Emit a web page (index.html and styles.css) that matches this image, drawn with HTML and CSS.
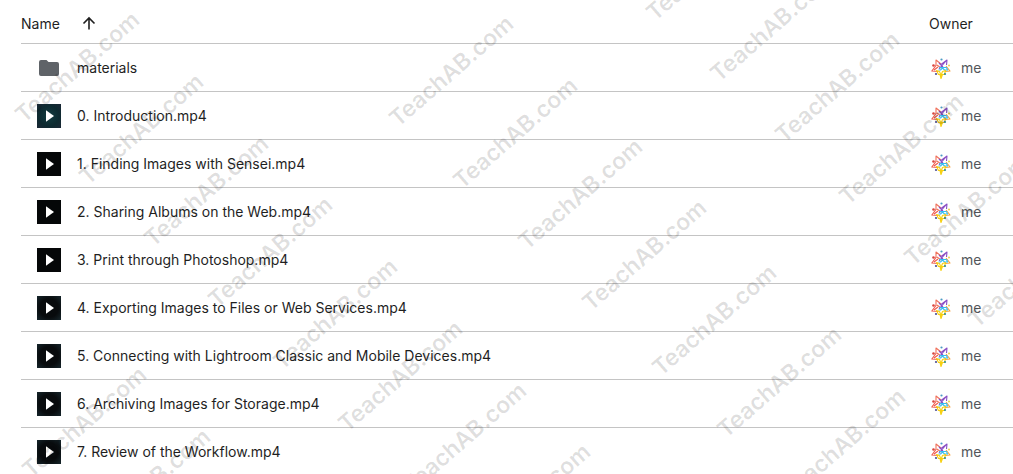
FILE: index.html
```html
<!DOCTYPE html>
<html lang="en">
  <head>
    <meta charset="UTF-8" />
    <meta name="viewport" content="width=device-width, initial-scale=1.0" />
    <title>Files</title>
    <link rel="stylesheet" href="styles.css">
  </head>
  <body>
    <!-- Shared icons -->
    <svg class="sprite" aria-hidden="true">
      <symbol id="play" viewBox="0 0 24 24">
        <path d="M9 6.200v11.600l8-5.800z" fill="#fff" />
      </symbol>
      <symbol id="avatar" viewBox="0 0 24 24">
        <g fill="none" stroke-width="1.100" stroke-linejoin="round">
          <path d="M12 8 7 4v6M8 9l4 3" stroke="#f0705a" />
          <path d="M7 9.500 2.800 15l6.500.5M5 14l4-3" stroke="#ef5b4c" />
          <path d="m17 10 4 5-5 .5" stroke="#f5a03c" />
          <path d="M12 8.500 18 4l-.5 5M17 5l-7 8M10 7l4 4" stroke="#8a4fc4" />
          <path d="M10 11.500h7.500l1 2.500h-3l-2-2-2 2h-2" stroke="#35bdf0" />
          <path d="m7.500 14.500 2 4h1.500l1 4 1.500-4h2l1-4-3 1-1.500 4-1.500-4z" stroke="#f7d010" />
        </g>
        <circle cx="12.500" cy="3.500" r="1.100" fill="#4a9bc4" />
        <circle cx="4.500" cy="9.500" r="1.300" fill="#d8453e" />
        <circle cx="20" cy="9.500" r="1" fill="#e8d24a" />
        <circle cx="7" cy="18" r="1.100" fill="#4a4f96" />
        <circle cx="16" cy="18" r="1.100" fill="#2f8f9c" />
      </symbol>
    </svg>

    <main class="files">
      <table class="file-table">
        <thead>
          <tr>
            <th class="col-name" scope="col" aria-sort="ascending">
              <div class="cell">
                Name
                <button class="sort-btn" type="button" aria-label="Reverse sort direction">
                  <svg width="16" height="16" viewBox="0 0 16 16" aria-hidden="true">
                    <path d="M8 13.500V2.500M2.500 7.500 8 2l5.500 5.500" fill="none" stroke="#1f1f1f" stroke-width="1.600" />
                  </svg>
                </button>
              </div>
            </th>
            <th class="col-owner" scope="col">Owner</th>
          </tr>
        </thead>
        <tbody>
          <tr>
            <td>
              <div class="cell file">
                <svg class="folder" viewBox="0 0 24 24" aria-hidden="true">
                  <path d="M4 4h5.500l2 2H20a2 2 0 0 1 2 2v10a2 2 0 0 1-2 2H4a2 2 0 0 1-2-2V6a2 2 0 0 1 2-2z" fill="#5f6368" />
                </svg>
                materials
              </div>
            </td>
            <td><div class="cell owner"><svg class="avatar"><use href="#avatar" /></svg>me</div></td>
          </tr>
          <tr>
            <td><div class="cell file"><svg class="thumb teal"><use href="#play" /></svg>0. Introduction.mp4</div></td>
            <td><div class="cell owner"><svg class="avatar"><use href="#avatar" /></svg>me</div></td>
          </tr>
          <tr>
            <td><div class="cell file"><svg class="thumb"><use href="#play" /></svg>1. Finding Images with Sensei.mp4</div></td>
            <td><div class="cell owner"><svg class="avatar"><use href="#avatar" /></svg>me</div></td>
          </tr>
          <tr>
            <td><div class="cell file"><svg class="thumb"><use href="#play" /></svg>2. Sharing Albums on the Web.mp4</div></td>
            <td><div class="cell owner"><svg class="avatar"><use href="#avatar" /></svg>me</div></td>
          </tr>
          <tr>
            <td><div class="cell file"><svg class="thumb"><use href="#play" /></svg>3. Print through Photoshop.mp4</div></td>
            <td><div class="cell owner"><svg class="avatar"><use href="#avatar" /></svg>me</div></td>
          </tr>
          <tr>
            <td><div class="cell file"><svg class="thumb dim"><use href="#play" /></svg>4. Exporting Images to Files or Web Services.mp4</div></td>
            <td><div class="cell owner"><svg class="avatar"><use href="#avatar" /></svg>me</div></td>
          </tr>
          <tr>
            <td><div class="cell file"><svg class="thumb dim"><use href="#play" /></svg>5. Connecting with Lightroom Classic and Mobile Devices.mp4</div></td>
            <td><div class="cell owner"><svg class="avatar"><use href="#avatar" /></svg>me</div></td>
          </tr>
          <tr>
            <td><div class="cell file"><svg class="thumb dim"><use href="#play" /></svg>6. Archiving Images for Storage.mp4</div></td>
            <td><div class="cell owner"><svg class="avatar"><use href="#avatar" /></svg>me</div></td>
          </tr>
          <tr>
            <td><div class="cell file"><svg class="thumb dim"><use href="#play" /></svg>7. Review of the Workflow.mp4</div></td>
            <td><div class="cell owner"><svg class="avatar"><use href="#avatar" /></svg>me</div></td>
          </tr>
        </tbody>
      </table>
    </main>

    <!-- Watermark over the whole page -->
    <svg class="watermark" aria-hidden="true">
      <text transform="translate(24 124) rotate(-41)">TeachAB.com</text>
      <text transform="translate(88 186) rotate(-41)">TeachAB.com</text>
      <text transform="translate(153 248) rotate(-41)">TeachAB.com</text>
      <text transform="translate(217 309) rotate(-41)">TeachAB.com</text>
      <text transform="translate(282 371) rotate(-41)">TeachAB.com</text>
      <text transform="translate(347 433) rotate(-41)">TeachAB.com</text>
      <text transform="translate(411 495) rotate(-41)">TeachAB.com</text>
      <text transform="translate(475 556) rotate(-41)">TeachAB.com</text>

      <text transform="translate(31 479) rotate(-41)">TeachAB.com</text>
      <text transform="translate(95 541) rotate(-41)">TeachAB.com</text>

      <text transform="translate(398 128) rotate(-41)">TeachAB.com</text>
      <text transform="translate(462 190) rotate(-41)">TeachAB.com</text>
      <text transform="translate(527 251) rotate(-41)">TeachAB.com</text>
      <text transform="translate(591 312) rotate(-41)">TeachAB.com</text>
      <text transform="translate(661 377) rotate(-41)">TeachAB.com</text>
      <text transform="translate(726 439) rotate(-41)">TeachAB.com</text>
      <text transform="translate(790 501) rotate(-41)">TeachAB.com</text>

      <text transform="translate(655 22) rotate(-41)">TeachAB.com</text>
      <text transform="translate(719 83) rotate(-41)">TeachAB.com</text>
      <text transform="translate(784 144) rotate(-41)">TeachAB.com</text>
      <text transform="translate(848 206) rotate(-41)">TeachAB.com</text>
      <text transform="translate(913 267) rotate(-41)">TeachAB.com</text>
      <text transform="translate(977 329) rotate(-41)">TeachAB.com</text>
    </svg>
  </body>
</html>
```
FILE: styles.css
```css
* {
  margin: 0;
  padding: 0;
  box-sizing: border-box;
}

body {
  position: relative;
  overflow-x: hidden;
  background: #fff;
  color: #1f1f1f;
  font-family: Inter, Roboto, sans-serif;
  font-size: 14px;
  line-height: 20px;
}

.sprite {
  position: absolute;
  width: 0;
  height: 0;
}

.files {
  padding-left: 21px;
}

.file-table {
  width: 100%;
  table-layout: fixed;
  border-collapse: separate;
  border-spacing: 0;
}

th,
td {
  height: 48px;
  border-bottom: 1px solid #c4c4c4;
  text-align: left;
  vertical-align: middle;
  white-space: nowrap;
}

th {
  height: 44px;
  padding-top: 4px;
  font-weight: 400;
}

.col-owner {
  width: 84px;
}

.cell {
  display: flex;
  align-items: center;
}

.sort-btn {
  display: flex;
  margin-left: 21px;
  border: none;
  background: none;
  cursor: pointer;
}

.file {
  gap: 16px;
  padding-left: 16px;
}

.folder,
.thumb {
  flex: none;
  width: 24px;
  height: 24px;
}

.thumb {
  background: #050708;
}

.thumb.teal {
  background: radial-gradient(circle, #123c40, #0d2a30 60%, #1c2836);
}

.thumb.dim {
  background: radial-gradient(circle, #080b0d 55%, #16262c);
}

.owner {
  gap: 8px;
  color: #53565a;
}

.avatar {
  flex: none;
  width: 24px;
  height: 24px;
}

.watermark {
  position: absolute;
  top: 0;
  left: 0;
  width: 100%;
  height: 100%;
  overflow: hidden;
  pointer-events: none;
  fill: rgba(0, 0, 0, 0.13);
  font-family: Inter, Roboto, sans-serif;
  font-size: 23px;
  font-weight: 600;
}
```
